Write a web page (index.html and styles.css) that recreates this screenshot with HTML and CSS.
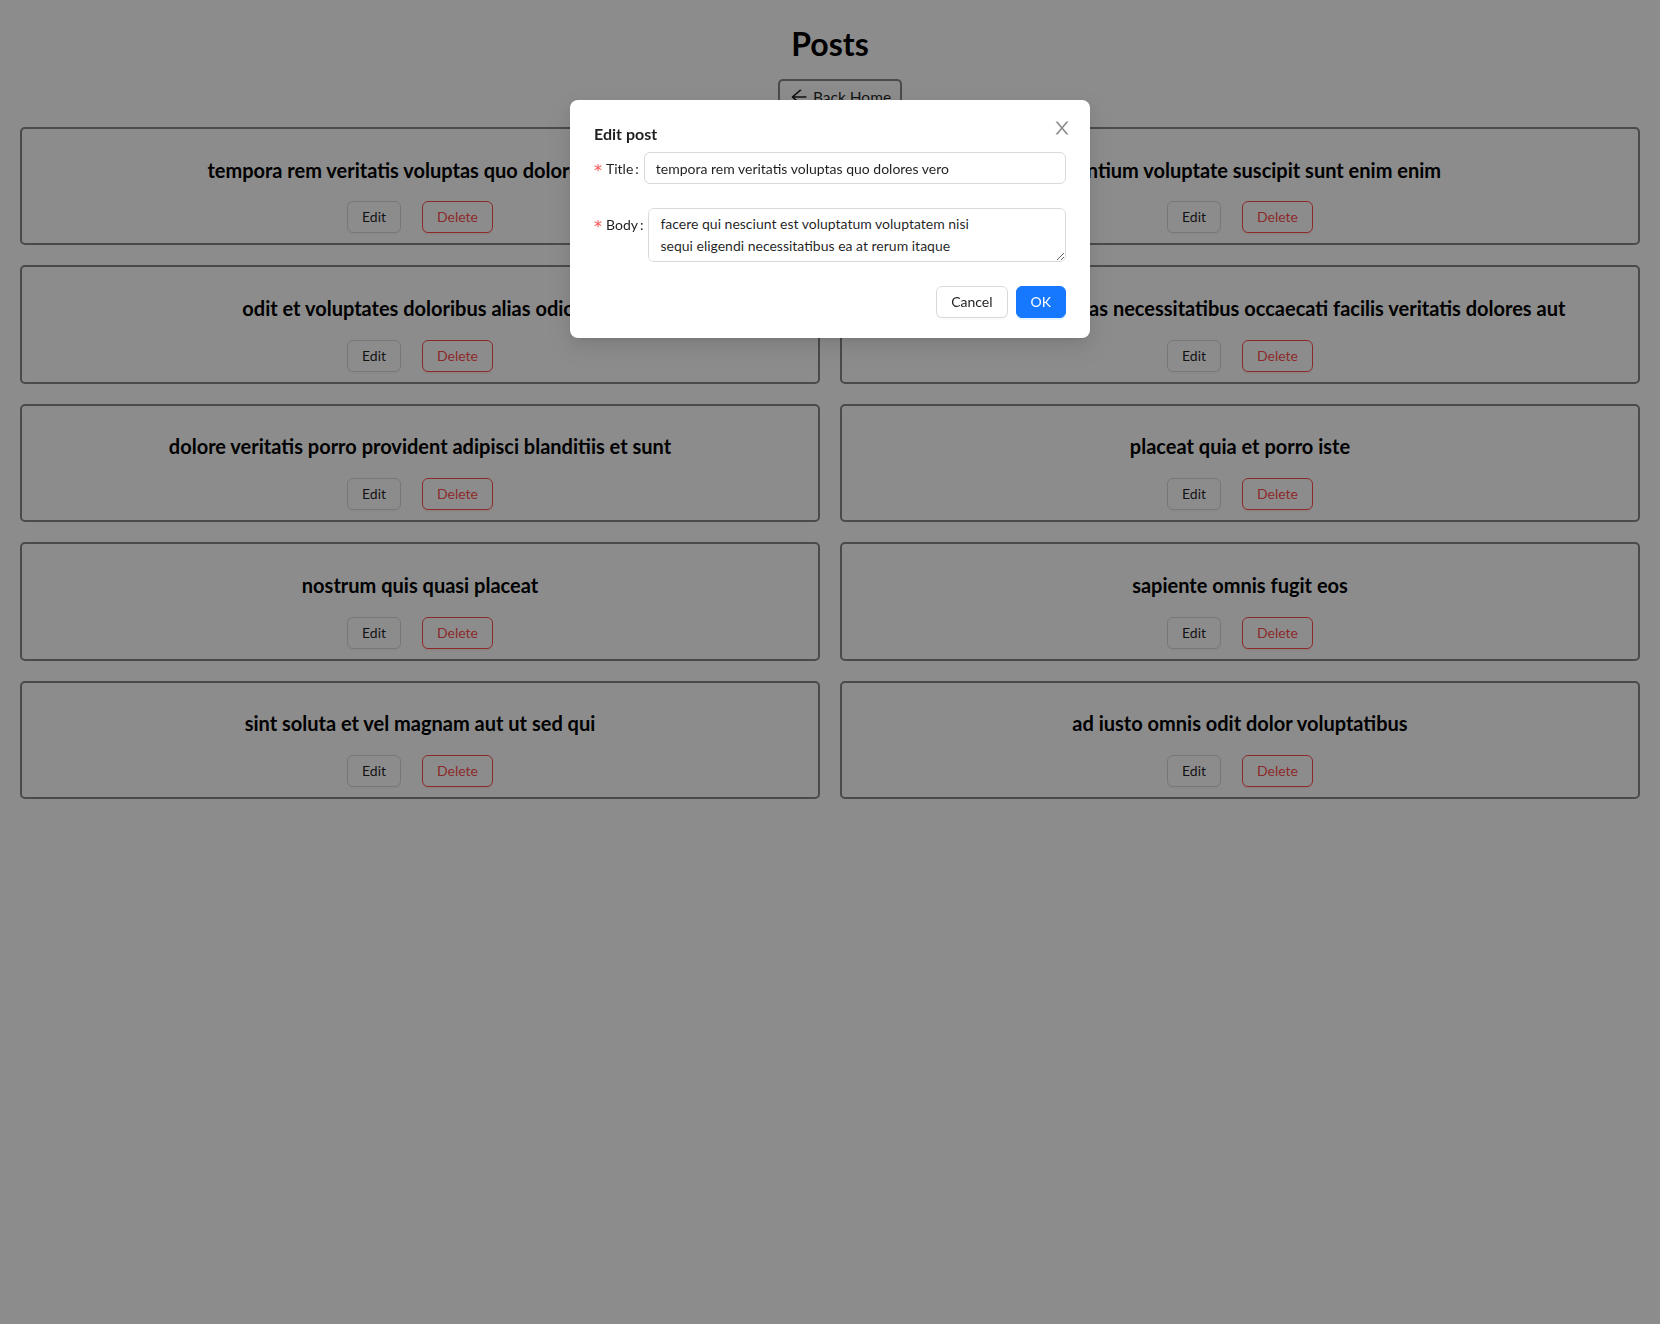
FILE: index.html
```html
<!DOCTYPE html>
<html lang="en">
<head>
<meta charset="utf-8">
<title>Posts</title>
<link rel="stylesheet" href="styles.css">
</head>
<body>
<main class="page">
  <h1 class="page-title">Posts</h1>
  <div class="back-row">
    <button class="back-btn" type="button">
      <svg class="back-icon" viewBox="64 64 896 896" width="18" height="18" aria-hidden="true"><path fill="currentColor" d="M872 474H286.9l350.2-304c5.6-4.9 2.2-14-5.2-14h-88.5c-3.9 0-7.6 1.4-10.5 3.900L155 487.8a31.96 31.96 0 000 48.3L535.1 866c1.5 1.3 3.3 2 5.2 2h91.5c7.4 0 10.8-9.2 5.2-14L286.9 550H872c4.4 0 8-3.6 8-8v-60c0-4.4-3.6-8-8-8z"/></svg>
      <span>Back Home</span>
    </button>
  </div>
  <div class="post-grid">
    <article class="post-card">
      <h3 class="post-title">tempora rem veritatis voluptas quo dolores vero</h3>
      <div class="post-actions"><button class="btn" type="button">Edit</button><button class="btn btn-danger" type="button">Delete</button></div>
    </article>
    <article class="post-card">
      <h3 class="post-title">laudantium voluptate suscipit sunt enim enim</h3>
      <div class="post-actions"><button class="btn" type="button">Edit</button><button class="btn btn-danger" type="button">Delete</button></div>
    </article>
    <article class="post-card">
      <h3 class="post-title">odit et voluptates doloribus alias odio et</h3>
      <div class="post-actions"><button class="btn" type="button">Edit</button><button class="btn btn-danger" type="button">Delete</button></div>
    </article>
    <article class="post-card">
      <h3 class="post-title">optio ipsam molestias necessitatibus occaecati facilis veritatis dolores aut</h3>
      <div class="post-actions"><button class="btn" type="button">Edit</button><button class="btn btn-danger" type="button">Delete</button></div>
    </article>
    <article class="post-card">
      <h3 class="post-title">dolore veritatis porro provident adipisci blanditiis et sunt</h3>
      <div class="post-actions"><button class="btn" type="button">Edit</button><button class="btn btn-danger" type="button">Delete</button></div>
    </article>
    <article class="post-card">
      <h3 class="post-title">placeat quia et porro iste</h3>
      <div class="post-actions"><button class="btn" type="button">Edit</button><button class="btn btn-danger" type="button">Delete</button></div>
    </article>
    <article class="post-card">
      <h3 class="post-title">nostrum quis quasi placeat</h3>
      <div class="post-actions"><button class="btn" type="button">Edit</button><button class="btn btn-danger" type="button">Delete</button></div>
    </article>
    <article class="post-card">
      <h3 class="post-title">sapiente omnis fugit eos</h3>
      <div class="post-actions"><button class="btn" type="button">Edit</button><button class="btn btn-danger" type="button">Delete</button></div>
    </article>
    <article class="post-card">
      <h3 class="post-title">sint soluta et vel magnam aut ut sed qui</h3>
      <div class="post-actions"><button class="btn" type="button">Edit</button><button class="btn btn-danger" type="button">Delete</button></div>
    </article>
    <article class="post-card">
      <h3 class="post-title">ad iusto omnis odit dolor voluptatibus</h3>
      <div class="post-actions"><button class="btn" type="button">Edit</button><button class="btn btn-danger" type="button">Delete</button></div>
    </article>
  </div>
</main>

<div class="modal-mask"></div>
<div class="modal-wrap">
  <div class="modal" role="dialog" aria-labelledby="modal-title">
    <button class="modal-close" type="button" aria-label="Close">
      <svg viewBox="64 64 896 896" width="18" height="18" aria-hidden="true"><path fill="currentColor" d="M563.8 512l262.5-312.9c4.4-5.2.7-13.1-6.1-13.1h-79.8c-4.7 0-9.2 2.1-12.3 5.7L511.6 449.8 295.1 191.7c-3-3.6-7.5-5.7-12.3-5.7H203c-6.8 0-10.5 7.9-6.1 13.1L459.4 512 196.9 824.9A7.95 7.95 0 00203 838h79.8c4.7 0 9.2-2.1 12.3-5.7l216.5-258.1 216.5 258.1c3 3.6 7.5 5.7 12.3 5.7h79.8c6.8 0 10.5-7.9 6.1-13.1L563.8 512z"/></svg>
    </button>
    <div class="modal-header"><div class="modal-title" id="modal-title">Edit post</div></div>
    <form class="modal-body">
      <div class="form-item form-item-title">
        <label class="form-label" for="title"><span class="req">*</span><span class="label-text">Title</span><span class="colon">:</span></label>
        <input class="input" id="title" type="text" value="tempora rem veritatis voluptas quo dolores vero">
      </div>
      <div class="form-item form-item-body">
        <label class="form-label" for="body"><span class="req">*</span><span class="label-text">Body</span><span class="colon">:</span></label>
        <textarea class="textarea" id="body">facere qui nesciunt est voluptatum voluptatem nisi
sequi eligendi necessitatibus ea at rerum itaque
harum non ratione velit laboriosam quis consequuntur
ex officiis minima doloremque voluptas ut aut</textarea>
      </div>
    </form>
    <div class="modal-footer">
      <button class="btn" type="button">Cancel</button>
      <button class="btn btn-primary" type="button">OK</button>
    </div>
  </div>
</div>
</body>
</html>
```
FILE: styles.css
```css
* { box-sizing: border-box; }

html, body {
  margin: 0;
  background: #ffffff;
  font-family: Lato, "Liberation Sans", sans-serif;
  color: #000;
}

.page {
  padding: 0 20px;
}

.page-title {
  margin: 23px 0 14px;
  font-size: 32px;
  line-height: 42px;
  font-weight: 700;
  text-align: center;
}

.back-row {
  display: flex;
  justify-content: center;
  padding-left: 20px;
}

.back-btn {
  display: inline-flex;
  align-items: center;
  gap: 5px;
  height: 36px;
  padding: 0 9px 0 10px;
  border: 2px solid #878787;
  border-radius: 5px;
  background: #fff;
  font-family: inherit;
  font-size: 15.5px;
  color: rgba(0, 0, 0, 0.88);
}

.back-icon { display: block; }

.post-grid {
  margin-top: 12px;
  display: grid;
  grid-template-columns: 1fr 1fr;
  gap: 20px;
}

.post-card {
  border: 2px solid #878787;
  border-radius: 5px;
  padding: 10px;
  text-align: center;
}

.post-title {
  margin: 18.7px 0 19.7px;
  font-size: 20px;
  line-height: 24px;
  font-weight: 700;
}

.post-actions {
  display: flex;
  justify-content: center;
  gap: 21px;
}

.btn {
  height: 32px;
  padding: 4px 14px;
  border: 1px solid #d9d9d9;
  border-radius: 6px;
  background: #fff;
  color: rgba(0, 0, 0, 0.88);
  font-family: inherit;
  font-size: 14px;
  line-height: 22px;
  box-shadow: 0 2px 0 rgba(0, 0, 0, 0.02);
  cursor: pointer;
}

.btn-danger {
  border-color: #ff4d4f;
  color: #ff4d4f;
  box-shadow: 0 2px 0 rgba(255, 38, 5, 0.06);
}

.btn-primary {
  border-color: #1677ff;
  background: #1677ff;
  color: #fff;
  box-shadow: 0 2px 0 rgba(5, 145, 255, 0.1);
}

/* modal */
.modal-mask {
  position: fixed;
  inset: 0;
  background: rgba(0, 0, 0, 0.45);
  z-index: 1000;
}

.modal-wrap {
  position: fixed;
  inset: 0;
  z-index: 1001;
  padding-top: 100px;
}

.modal {
  position: relative;
  width: 520px;
  margin: 0 auto;
  padding: 20px 24px;
  background: #fff;
  border-radius: 8px;
  box-shadow: 0 6px 16px 0 rgba(0, 0, 0, 0.08), 0 3px 6px -4px rgba(0, 0, 0, 0.12), 0 9px 28px 8px rgba(0, 0, 0, 0.05);
  color: rgba(0, 0, 0, 0.88);
  font-size: 14px;
}

.modal-close {
  position: absolute;
  top: 17px;
  right: 17px;
  width: 22px;
  height: 22px;
  padding: 0;
  border: 0;
  background: transparent;
  color: rgba(0, 0, 0, 0.45);
  display: flex;
  align-items: center;
  justify-content: center;
}

.modal-header {
  padding-top: 2px;
  margin-bottom: 6px;
}

.modal-title {
  font-size: 16px;
  line-height: 24px;
  font-weight: 700;
  color: rgba(0, 0, 0, 0.88);
}

.modal-body { margin: 0; }

.form-item {
  display: flex;
  align-items: flex-start;
}

.form-item-title { margin-bottom: 24px; }
.form-item-body { margin-bottom: 24px; }

.form-label {
  display: flex;
  align-items: center;
  height: 32px;
  font-size: 14px;
  color: rgba(0, 0, 0, 0.88);
  white-space: nowrap;
}

.req {
  display: inline-block;
  padding-top: 5px;
  margin-right: 4px;
  color: #ff4d4f;
  font-family: "DejaVu Sans", sans-serif;
  font-size: 16px;
  line-height: 16px;
}

.colon {
  margin: 0 5px 0 2px;
}

.input,
.textarea {
  flex: 1;
  min-width: 0;
  padding: 4px 11px;
  border: 1px solid #d9d9d9;
  border-radius: 6px;
  background: #fff;
  color: rgba(0, 0, 0, 0.88);
  font-family: inherit;
  font-size: 14px;
  line-height: 22px;
  outline: none;
}

.input { height: 32px; }

.textarea {
  height: 54px;
  resize: vertical;
  overflow: auto;
  scrollbar-width: none;
}

.modal-footer {
  display: flex;
  justify-content: flex-end;
  gap: 8px;
}
```
